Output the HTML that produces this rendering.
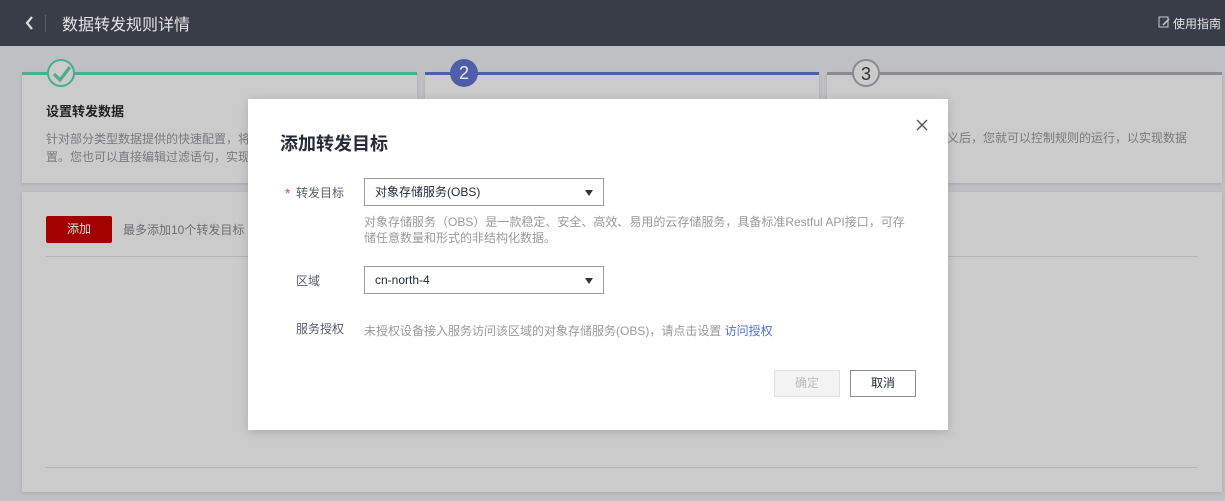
<!DOCTYPE html>
<html><head><meta charset="utf-8"><style>
*{margin:0;padding:0;box-sizing:border-box}
body{width:1225px;height:501px;overflow:hidden;background:#bfc0c3;font-family:"Liberation Sans","Noto Sans CJK SC",sans-serif;position:relative;font-size:12px}
.a{position:absolute}
.hdr{left:0;top:0;width:1225px;height:46px;background:#393d48;color:#e8e8e8}
.card{background:#cbcbcc;box-shadow:0 1px 3px rgba(0,0,0,.12)}
.circ{width:28px;height:28px;border-radius:50%;text-align:center;line-height:26px;font-size:18px}
.sel{border:1px solid #9a9a9a;height:28px;width:240px;padding-left:10px;line-height:26px;font-size:12px;color:#252b3a}
.sel:after{content:"";position:absolute;right:10px;top:11px;border-left:4px solid transparent;border-right:4px solid transparent;border-top:6px solid #333}
.lbl{color:#575d6c;font-size:12px}
</style></head><body>
<div class="a hdr">
 <svg class="a" style="left:25px;top:16px" width="10" height="14"><path d="M7 1 L2 7 L7 13" stroke="#ddd" stroke-width="2.2" fill="none"/></svg>
 <div class="a" style="left:45px;top:15px;width:1px;height:17px;background:#5a5e68"></div>
 <div class="a" style="left:62px;top:11px;font-size:16px;color:#e4e4e6">数据转发规则详情</div>
 <svg class="a" style="left:1158px;top:16px" width="12" height="12"><rect x="1" y="1" width="9" height="10" fill="none" stroke="#ccc"/><path d="M5 9 L11 3" stroke="#ccc" stroke-width="1.5"/></svg>
 <div class="a" style="left:1173px;top:15px;font-size:12px;color:#e4e4e6">使用指南</div>
</div>
<div class="a card" style="left:22px;top:73px;width:395px;height:110px"></div>
<div class="a card" style="left:425px;top:73px;width:394px;height:110px"></div>
<div class="a card" style="left:827px;top:73px;width:395px;height:110px"></div>
<div class="a" style="left:22px;top:72px;width:395px;height:3px;background:#4aae8a"></div>
<div class="a" style="left:425px;top:72px;width:394px;height:3px;background:#4f5ea8"></div>
<div class="a" style="left:827px;top:72px;width:395px;height:3px;background:#8a8b8f"></div>
<div class="a circ" style="left:47px;top:59px;border:2px solid #4aae8a;background:#cbcbcc">
 <svg class="a" style="left:3px;top:3px" width="20" height="20"><path d="M2 10 L8 16 L18 3" stroke="#4aae8a" stroke-width="3.2" fill="none"/></svg></div>
<div class="a circ" style="left:450px;top:59px;background:#4f5ea8;color:#e8e8f0;line-height:28px">2</div>
<div class="a circ" style="left:852px;top:59px;border:2px solid #8a8b8f;background:#cbcbcc;color:#333">3</div>
<div class="a" style="left:46px;top:101px;font-size:13px;font-weight:bold;color:#222">设置转发数据</div>
<div class="a" style="left:46px;top:130px;color:#7a7a7c;line-height:18px">针对部分类型数据提供的快速配置，将<br>置。您也可以直接编辑过滤语句，实现</div>
<div class="a" style="left:947px;top:129px;color:#7a7a7c">义后，您就可以控制规则的运行，以实现数据</div>
<div class="a card" style="left:22px;top:192px;width:1200px;height:300px"></div>
<div class="a" style="left:46px;top:216px;width:66px;height:27px;background:#a30000;color:#ddd;text-align:center;line-height:27px;border-radius:2px">添加</div>
<div class="a" style="left:123px;top:221px;color:#6e6e70">最多添加10个转发目标</div>
<div class="a" style="left:46px;top:256px;width:1152px;height:1px;background:#b5b5b7"></div>
<div class="a" style="left:46px;top:467px;width:1152px;height:1px;background:#b5b5b7"></div>

<div class="a" style="left:248px;top:99px;width:700px;height:331px;background:#fff;box-shadow:0 2px 10px rgba(0,0,0,.15)">
 <svg class="a" style="left:668px;top:20px" width="12" height="12"><path d="M1 1 L11 11 M11 1 L1 11" stroke="#555" stroke-width="1.4"/></svg>
 <div class="a" style="left:32px;top:31px;font-size:18px;font-weight:bold;color:#252b3a">添加转发目标</div>
 <div class="a" style="left:37px;top:86px;color:#e84e40;font-size:14px">*</div>
 <div class="a lbl" style="left:48px;top:85px">转发目标</div>
 <div class="a sel" style="left:116px;top:79px">对象存储服务(OBS)</div>
 <div class="a" style="left:116px;top:115px;color:#9a9a9a;line-height:16px;width:548px">对象存储服务（OBS）是一款稳定、安全、高效、易用的云存储服务，具备标准Restful API接口，可存储任意数量和形式的非结构化数据。</div>
 <div class="a lbl" style="left:48px;top:173px">区域</div>
 <div class="a sel" style="left:116px;top:167px">cn-north-4</div>
 <div class="a lbl" style="left:48px;top:221px">服务授权</div>
 <div class="a" style="left:116px;top:223px;color:#9a9a9a">未授权设备接入服务访问该区域的对象存储服务(OBS)，请点击设置 <span style="color:#526ecc">访问授权</span></div>
 <div class="a" style="left:526px;top:271px;width:66px;height:27px;border:1px solid #dfe1e6;background:#f3f3f3;color:#bbb;text-align:center;line-height:25px">确定</div>
 <div class="a" style="left:602px;top:271px;width:66px;height:27px;border:1px solid #8a8e99;color:#252b3a;text-align:center;line-height:25px">取消</div>
</div>
</body></html>
